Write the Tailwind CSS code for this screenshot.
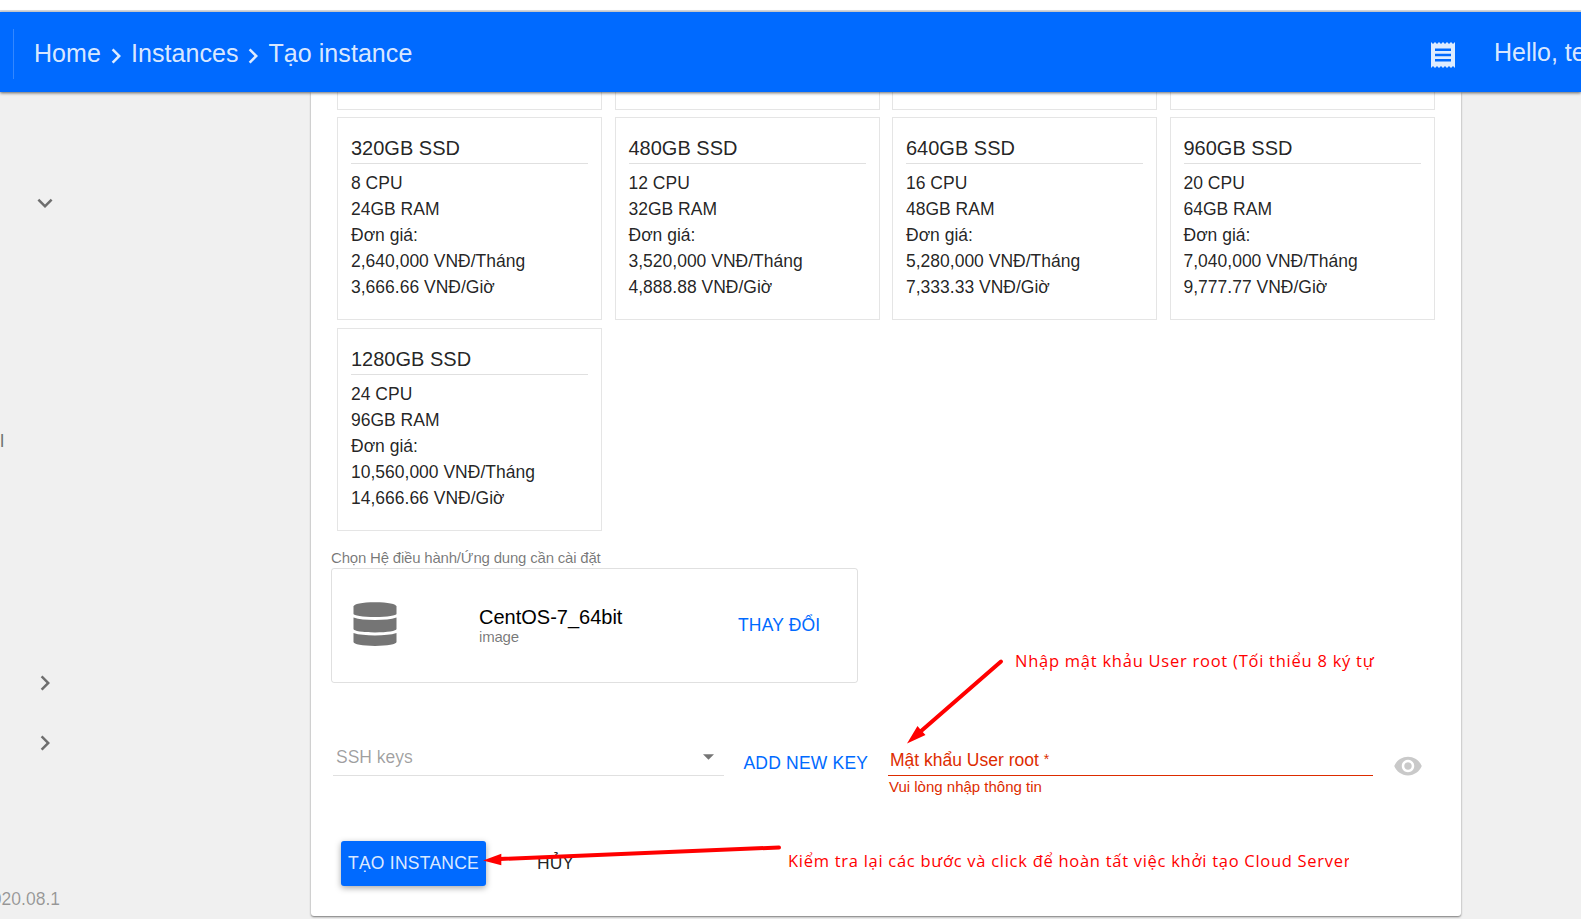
<!DOCTYPE html>
<html lang="vi">
<head>
<meta charset="utf-8">
<title>Tạo instance</title>
<script src="https://cdn.jsdelivr.net/npm/@tailwindcss/browser@4"></script>
</head>
<body class="w-[1581px] h-[919px] overflow-hidden bg-white font-['Liberation_Sans',Arial,sans-serif] text-[17.5px] text-black/87">
<div class="relative h-[919px] flex flex-col overflow-hidden">
  <div class="h-3 shrink-0 border-b-2 border-[#dadce0] bg-white"></div>
  <header class="relative z-10 h-20 shrink-0 bg-[#006aff] flex items-center text-[25px] text-white/87 shadow-[0_1px_3px_rgba(0,0,0,0.6)]">
    <div class="ml-[13px] h-[50px] w-px mt-1 bg-white/20"></div>
    <nav class="ml-5 flex items-center whitespace-nowrap mt-1 tracking-[0.06px]">
      <span>Home</span>
      <svg class="size-[30px] mt-[3px]" viewBox="0 0 24 24" fill="currentColor"><path d="M10 6L8.59 7.41 13.17 12l-4.58 4.59L10 18l6-6z"/></svg>
      <span>Instances</span>
      <svg class="size-[30px] mt-[3px]" viewBox="0 0 24 24" fill="currentColor"><path d="M10 6L8.59 7.41 13.17 12l-4.58 4.59L10 18l6-6z"/></svg>
      <span>Tạo instance</span>
    </nav>
    <div class="ml-auto w-[150px] flex items-center">
      <svg class="w-6 h-[26px] mt-1.5 shrink-0" viewBox="3 2 18 20" preserveAspectRatio="none" fill="currentColor"><path d="M18 17H6v-2h12v2zm0-4H6v-2h12v2zm0-4H6V7h12v2zM3 22l1.5-1.5L6 22l1.5-1.5L9 22l1.5-1.5L12 22l1.5-1.5L15 22l1.5-1.5L18 22l1.5-1.5L21 22V2l-1.5 1.5L18 2l-1.5 1.5L15 2l-1.5 1.5L12 2l-1.5 1.5L9 2 7.500 3.500 6 2 4.500 3.500 3 2v20z"/></svg>
      <span class="ml-[39px] mt-0.5 whitespace-nowrap">Hello, te</span>
    </div>
  </header>
  <div class="flex-1 min-h-0 flex bg-[#f0f0f0]">
    <aside class="w-[311px] shrink-0 flex flex-col text-black/54">
      <svg class="size-[30px] ml-[30px] mt-24" viewBox="0 0 24 24" fill="currentColor"><path d="M7.410 8.590L12 13.170l4.590-4.580L18 10l-6 6-6-6z"/></svg>
      <div class="mt-[211px] h-6 leading-6 text-[19px]">l</div>
      <svg class="size-[30px] ml-[29.5px] mt-[215px]" viewBox="0 0 24 24" fill="currentColor"><path d="M10 6L8.59 7.41 13.17 12l-4.58 4.59L10 18l6-6z"/></svg>
      <svg class="size-[30px] ml-[29.5px] mt-[30px]" viewBox="0 0 24 24" fill="currentColor"><path d="M10 6L8.59 7.41 13.17 12l-4.58 4.59L10 18l6-6z"/></svg>
      <div class="mt-[129px] w-[60px] h-6 leading-6 flex justify-end overflow-hidden text-black/38"><span>2020.08.1</span></div>
    </aside>
    <main class="w-[1150px] h-[824px] shrink-0 bg-white rounded-b-[3px] shadow-[0_1px_2px_rgba(0,0,0,0.5)] flex flex-col">
      <div class="ml-[26px] grid grid-cols-[repeat(4,265px)] gap-x-[12.5px] gap-y-2" id="plans">
        <div class="h-[18px] -mb-px border border-t-0 border-black/10"></div>
        <div class="h-[18px] -mb-px border border-t-0 border-black/10"></div>
        <div class="h-[18px] -mb-px border border-t-0 border-black/10"></div>
        <div class="h-[18px] -mb-px border border-t-0 border-black/10"></div>
      </div>
      <template id="plan">
        <section class="h-[203px] border border-black/10 px-[13px] pt-4 leading-[26px] whitespace-nowrap">
          <h3 class="h-[30px] leading-[28px] text-[20px] border-b border-black/12 mb-[6px]"></h3>
          <p></p><p></p><p>Đơn giá:</p><p></p><p></p>
        </section>
      </template>
      <div class="ml-5 mt-[17px] h-5 leading-5 text-[15px] tracking-[-0.2px] text-black/54 whitespace-nowrap">Chọn Hệ điều hành/Ứng dung cần cài đặt</div>
      <div class="ml-5 w-[527px] h-[115px] border border-black/12 rounded-[3px] flex items-center pl-[21px]">
        <svg class="w-11 h-11 -mt-[3px] shrink-0 text-[#757575]" viewBox="0 0 44 44" fill="currentColor">
          <path d="M.5 4.500C.5 2 9 .2 22 .2S43.500 2 43.500 4.500V12c0 1.500-9 3-21.500 3S.5 13.500.5 12z"/>
          <path d="M.5 15.500C6 17.300 13 18 22 18s16-.7 21.500-2.500V27c0 2-9 3.400-21.500 3.400S.5 29 .5 27z"/>
          <path d="M.5 31C6 32.800 13 33.400 22 33.400S38 32.800 43.500 31v9c0 2.200-9 3.900-21.500 3.900S.5 42.200.5 40z"/>
        </svg>
        <div class="ml-[82px] w-[259px] whitespace-nowrap">
          <div class="text-[20px] leading-[22px] text-black">CentOS-7_64bit</div>
          <div class="text-[15px] leading-[18px] tracking-[-0.2px] text-black/54">image</div>
        </div>
        <span class="text-[#006aff] whitespace-nowrap tracking-[0.15px]">THAY ĐỔI</span>
      </div>
      <div class="mt-[55px] ml-[22px] h-[68px] flex items-start whitespace-nowrap">
        <div class="w-[391px] h-[38px] border-b border-black/12 flex items-center pl-[3px] pr-[10px] text-black/38">
          <span class="mt-0.5">SSH keys</span>
          <svg class="ml-auto w-[11px] h-[6px] text-black/54" viewBox="0 0 10 5" fill="currentColor"><path d="M0 0h10L5 5z"/></svg>
        </div>
        <span class="ml-[19.5px] mt-[13px] w-[144.5px] leading-6 tracking-[0.2px] text-[#006aff]">ADD NEW KEY</span>
        <div class="w-[485px] text-[#dd2c00]">
          <div class="h-[38px] border-b border-[#dd2c00] pt-[10px] leading-6 pl-0.5 flex gap-[5px]"><span>Mật khẩu User root</span><span class="text-[14px] leading-[22px]">*</span></div>
          <div class="text-[15px] leading-[22px] pl-px">Vui lòng nhập thông tin</div>
        </div>
        <svg class="ml-5 mt-[13px] size-[30px] text-[#c9c9c9]" viewBox="0 0 24 24" fill="currentColor"><path d="M12 4.500C7 4.500 2.730 7.610 1 12c1.730 4.390 6 7.500 11 7.500s9.270-3.110 11-7.500c-1.730-4.390-6-7.500-11-7.500zM12 17c-2.760 0-5-2.240-5-5s2.240-5 5-5 5 2.240 5 5-2.240 5-5 5zm0-8c-1.660 0-3 1.340-3 3s1.340 3 3 3 3-1.340 3-3-1.340-3-3-3z"/></svg>
      </div>
      <div class="ml-[30px] mt-[35px] flex items-center whitespace-nowrap">
        <button class="w-[145px] h-[45px] bg-[#006aff] rounded-[3px] tracking-[0.25px] text-white/87 shadow-[0_2px_6px_rgba(0,0,0,0.35)]">TẠO INSTANCE</button>
        <span class="ml-[51px]">HỦY</span>
      </div>
    </main>
  </div>
  <svg class="absolute inset-0 z-20 w-full h-full pointer-events-none" viewBox="0 0 1581 919" stroke="#f00" fill="#f00" stroke-linecap="round">
    <path d="M1001 661.500L920 732" stroke-width="4"/><path d="M907 743.500l10.500-17.500 2.500 3 5.500 6z" stroke="none"/>
    <path d="M779 847.500L500 859" stroke-width="4"/><path d="M483 860.500l18.300-6.800v11.600z" stroke="none"/>
  </svg>
  <div class="absolute z-20 left-[1015px] top-[648px] w-[360px] h-7 leading-[26px] overflow-hidden whitespace-nowrap text-[#f00] font-['Open_Sans','Noto_Sans',sans-serif] text-[16.500px] tracking-[0.75px]">Nhập mật khảu User root (Tối thiểu 8 ký tự)</div>
  <div class="absolute z-20 left-[788px] top-[848px] w-[561px] h-7 leading-[26px] overflow-hidden whitespace-nowrap text-[#f00] font-['Open_Sans','Noto_Sans',sans-serif] text-[16.500px] tracking-[0.72px]">Kiểm tra lại các bước và click để hoàn tất việc khởi tạo Cloud Server</div>
</div>
<script>
const plans = [
  ['320GB SSD','8 CPU','24GB RAM','2,640,000 VNĐ/Tháng','3,666.66 VNĐ/Giờ'],
  ['480GB SSD','12 CPU','32GB RAM','3,520,000 VNĐ/Tháng','4,888.88 VNĐ/Giờ'],
  ['640GB SSD','16 CPU','48GB RAM','5,280,000 VNĐ/Tháng','7,333.33 VNĐ/Giờ'],
  ['960GB SSD','20 CPU','64GB RAM','7,040,000 VNĐ/Tháng','9,777.77 VNĐ/Giờ'],
  ['1280GB SSD','24 CPU','96GB RAM','10,560,000 VNĐ/Tháng','14,666.66 VNĐ/Giờ']
];
for (const [title, ...lines] of plans) {
  const card = document.getElementById('plan').content.cloneNode(true);
  card.querySelector('h3').textContent = title;
  const p = card.querySelectorAll('p');
  [0, 1, 3, 4].forEach((slot, i) => { p[slot].textContent = lines[i]; });
  document.getElementById('plans').append(card);
}
</script>
</body>
</html>
